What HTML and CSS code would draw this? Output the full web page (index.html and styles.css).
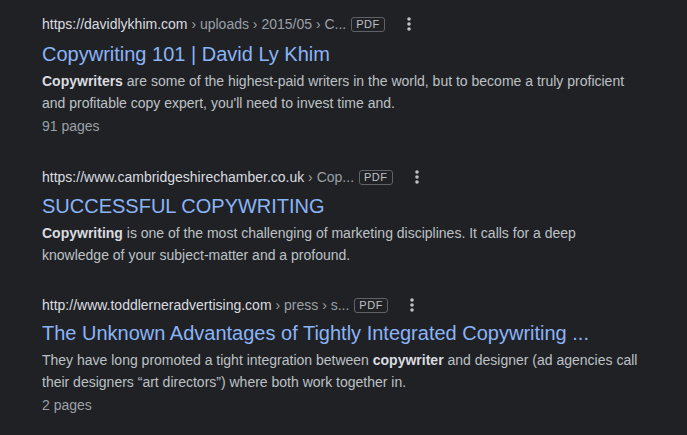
FILE: index.html
```html
<!DOCTYPE html>
<html>
<head>
<meta charset="utf-8">
<link rel="stylesheet" href="styles.css">
</head>
<body>
<div class="results">
  <div class="result first">
    <div class="url-row">
      <span class="domain">https://davidlykhim.com</span><span class="crumbs"> › uploads › 2015/05 › C...</span>
      <span class="badge">PDF</span>
      <span class="more"><svg width="4" height="14" viewBox="0 0 4 14"><circle cx="2" cy="2" r="1.8"/><circle cx="2" cy="7" r="1.8"/><circle cx="2" cy="12" r="1.8"/></svg></span>
    </div>
    <div class="title">Copywriting 101 | David Ly Khim</div>
    <div class="snippet"><b>Copywriters</b> are some of the highest-paid writers in the world, but to become a truly proficient and profitable copy expert, you'll need to invest time and.</div>
    <div class="pages">91 pages</div>
  </div>
  <div class="result mid">
    <div class="url-row">
      <span class="domain">https://www.cambridgeshirechamber.co.uk</span><span class="crumbs"> › Cop...</span>
      <span class="badge">PDF</span>
      <span class="more"><svg width="4" height="14" viewBox="0 0 4 14"><circle cx="2" cy="2" r="1.8"/><circle cx="2" cy="7" r="1.8"/><circle cx="2" cy="12" r="1.8"/></svg></span>
    </div>
    <div class="title">SUCCESSFUL COPYWRITING</div>
    <div class="snippet"><b>Copywriting</b> is one of the most challenging of marketing disciplines. It calls for a deep knowledge of your subject-matter and a profound.</div>
  </div>
  <div class="result tight">
    <div class="url-row">
      <span class="domain">http://www.toddlerneradvertising.com</span><span class="crumbs"> › press › s...</span>
      <span class="badge">PDF</span>
      <span class="more"><svg width="4" height="14" viewBox="0 0 4 14"><circle cx="2" cy="2" r="1.8"/><circle cx="2" cy="7" r="1.8"/><circle cx="2" cy="12" r="1.8"/></svg></span>
    </div>
    <div class="title">The Unknown Advantages of Tightly Integrated Copywriting ...</div>
    <div class="snippet">They have long promoted a tight integration between <b>copywriter</b> and designer (ad agencies call their designers “art directors”) where both work together in.</div>
    <div class="pages">2 pages</div>
  </div>
</div>
</body>
</html>
```
FILE: styles.css
```css
html, body {
  margin: 0;
  padding: 0;
  background: #202124;
}
body {
  font-family: "Liberation Sans", Arial, sans-serif;
  color: #bdc1c6;
}
.results {
  padding: 14px 0 0 42px;
  width: 600px;
}
.result {
  margin-bottom: 30px;
}
.result.mid {
  margin-bottom: 29px;
}
.url-row {
  display: flex;
  align-items: center;
  height: 20px;
  font-size: 14px;
  line-height: 20px;
  white-space: nowrap;
}
.domain {
  color: #dadce0;
}
.crumbs {
  color: #9aa0a6;
  white-space: pre;
}
.badge {
  margin-left: 5px;
  border: 1px solid #5f6368;
  border-radius: 3px;
  font-size: 11px;
  line-height: 13px;
  padding: 0 4px;
  color: #bdc1c6;
  letter-spacing: 0.5px;
}
.more {
  display: flex;
  margin-left: 22px;
  fill: #bdc1c6;
}
.title {
  margin-top: 6px;
  font-size: 20px;
  line-height: 26px;
  color: #8ab4f8;
  white-space: nowrap;
}
.first .title {
  margin-top: 7px;
}
.tight .title {
  margin-top: 5px;
}
.snippet {
  margin-top: 3px;
  font-size: 14px;
  line-height: 22px;
  color: #bdc1c6;
}
.snippet b {
  color: #dadce0;
}
.pages {
  margin-top: 1px;
  font-size: 14px;
  line-height: 22px;
  color: #9aa0a6;
}
```
